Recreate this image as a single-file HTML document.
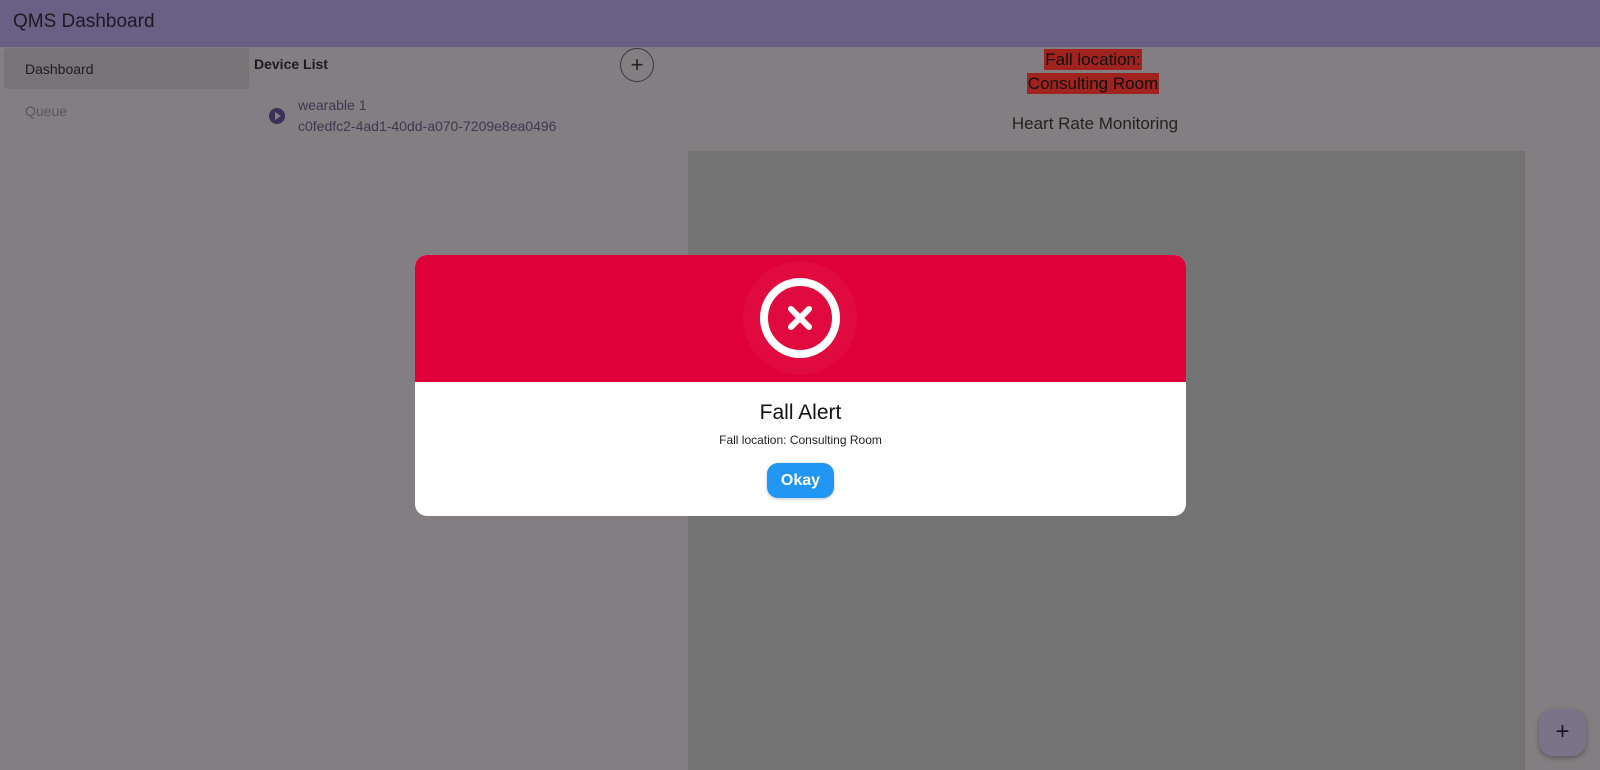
<!DOCTYPE html>
<html><head><style>
body{margin:0;width:1600px;height:770px;overflow:hidden;background:#827e81;font-family:"Liberation Sans",sans-serif;position:relative}
.a{position:absolute}
.hl{background:#a0231f;padding:1px 1px}
</style></head><body>
<div class="a" style="left:0;top:0;width:1600px;height:47px;background:#6a5f84"></div>
<div class="a" style="left:13px;top:11px;font-size:19px;color:#1e1a24">QMS Dashboard</div>
<div class="a" style="left:4px;top:48px;width:245px;height:41px;background:#777478;border-radius:4px"></div>
<div class="a" style="left:25px;top:61px;font-size:14px;color:#1e1c20">Dashboard</div>
<div class="a" style="left:25px;top:103px;font-size:14px;color:#5a575a">Queue</div>
<div class="a" style="left:254px;top:56px;font-size:14px;font-weight:bold;color:#1e1c20">Device List</div>
<div class="a" style="left:620px;top:48px;width:32px;height:32px;border:1px solid #3a383b;border-radius:50%;text-align:center;line-height:31px;font-size:22px;color:#222">+</div>
<div class="a" style="left:269px;top:108px;width:16px;height:16px;border-radius:50%;background:#3c2f58"></div>
<div class="a" style="left:275px;top:112px;width:0;height:0;border-left:6px solid #827e81;border-top:4px solid transparent;border-bottom:4px solid transparent"></div>
<div class="a" style="left:298px;top:97px;font-size:14px;color:#40384f">wearable 1</div>
<div class="a" style="left:298px;top:118px;font-size:14px;color:#40384f">c0fedfc2-4ad1-40dd-a070-7209e8ea0496</div>
<div class="a" style="left:993px;top:48px;width:200px;text-align:center;font-size:17px;line-height:24px;color:#111"><span class="hl">Fall location:</span><br><span class="hl">Consulting Room</span></div>
<div class="a" style="left:960px;top:114px;width:270px;text-align:center;font-size:17px;color:#222">Heart Rate Monitoring</div>
<div class="a" style="left:688px;top:151px;width:837px;height:619px;background:#737373"></div>
<div class="a" style="left:1539px;top:709px;width:47px;height:47px;border-radius:14px;background:#7b7489;box-shadow:0 2px 5px rgba(0,0,0,.3);text-align:center;line-height:45px;font-size:24px;color:#1c1528">+</div>
<div class="a" style="left:415px;top:255px;width:771px;height:261px;background:#fff;border-radius:12px;overflow:hidden">
 <div style="height:127px;background:#df0039;position:relative">
  <div class="a" style="left:328px;top:6px;width:114px;height:114px;border-radius:50%;background:#e10a3e"></div>
  <div class="a" style="left:345px;top:23px;width:64px;height:64px;border:8px solid #fff;border-radius:50%"></div>
  <svg class="a" style="left:370px;top:48px" width="30" height="30" viewBox="0 0 30 30"><path d="M6 6L24 24M24 6L6 24" stroke="#fff" stroke-width="6" stroke-linecap="round"/></svg>
 </div>
 <div style="text-align:center;font-size:21px;color:#111;margin-top:19px">Fall Alert</div>
 <div style="text-align:center;font-size:12px;color:#222;margin-top:8px">Fall location: Consulting Room</div>
 <div style="margin:16px auto 0;width:67px;height:35px;border-radius:11px;background:#2196f3;color:#fff;font-weight:bold;font-size:16px;text-align:center;line-height:35px;box-shadow:0 1px 3px rgba(0,0,0,.25)">Okay</div>
</div>
</body></html>
